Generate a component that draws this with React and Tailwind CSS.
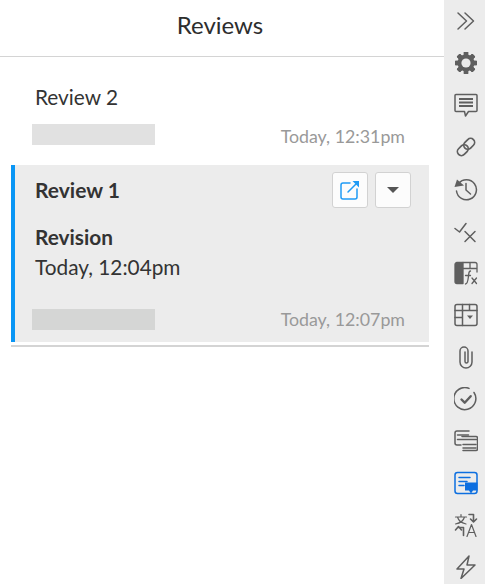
const Glyph = ({ children, fill = "none", stroke = "#5f5f5f", width = 1.5, box = "0 0 24 24" }) => (
  <svg viewBox={box} className="w-[24px] h-[24px]" fill={fill} stroke={stroke} strokeWidth={width} strokeLinecap="round" strokeLinejoin="round">
    {children}
  </svg>
);

const gearTeeth = [0, 45, 90, 135, 180, 225, 270, 315];

const SIDE_ICONS = [
  <Glyph key="collapse" width={1.5}>
    <path d="M4 4l8.500 8L4 20" />
    <path d="M11 4l8.500 8-8.500 8" />
  </Glyph>,
  <Glyph key="settings" width={0}>
    {gearTeeth.map((a) => (
      <rect key={a} x="9.800" y="1" width="4.400" height="22" rx="0.600" fill="#5f5f5f" transform={`rotate(${a} 12 12)`} />
    ))}
    <circle cx="12" cy="12" r="8.500" fill="#5f5f5f" />
    <circle cx="12" cy="12" r="4.600" fill="#ececec" />
  </Glyph>,
  <Glyph key="comment" width={1.500}>
    <path d="M2 1.500h20a1 1 0 0 1 1 1v15a1 1 0 0 1-1 1h-7.500L11.500 23l-1-4.500H2a1 1 0 0 1-1-1v-15a1 1 0 0 1 1-1z" />
    <path d="M5 6h14M5 9.500h14M5 13h14" strokeWidth={1.800} strokeLinecap="butt" />
  </Glyph>,
  <Glyph key="link" width={1.700}>
    <g transform="rotate(-45 12 12)">
      <rect x="1.500" y="8" width="12" height="8" rx="4" />
      <rect x="10.500" y="8" width="12" height="8" rx="4" />
    </g>
  </Glyph>,
  <Glyph key="history" width={1.500}>
    <path d="M4.600 6.500A10 10 0 1 1 2.500 14" />
    <path d="M0.500 10L3 2.500 10 8.500z" fill="#5f5f5f" stroke="none" />
    <path d="M12 6.500V13l4.500 4" />
  </Glyph>,
  <Glyph key="check-cross" width={1.500}>
    <path d="M1 9.500l4.500 3.500L12 4.500" />
    <path d="M11 12.500l10 10M21 12.500l-10 10" />
  </Glyph>,
  <Glyph key="formula" width={1.300}>
    <path d="M9 1.500H3a2 2 0 0 0-2 2v17a2 2 0 0 0 2 2h6z" fill="#5f5f5f" stroke="#5f5f5f" />
    <path d="M9 1.500h12a2 2 0 0 1 2 2V11M9 7.500h14M16 1.500v6" />
    <path d="M16.500 10c-2 0-1.600 2-2 5s-.6 8-3 8M11.500 14.500h5" />
    <path d="M18 17l4.500 5.500M22.500 17L18 22.500" />
  </Glyph>,
  <Glyph key="table" width={1.500}>
    <rect x="1" y="1.500" width="22" height="21" rx="2" />
    <path d="M1 7.500h22M1 14.500h7M8.500 1.500v21M15.500 1.500v6" />
    <path d="M13 12.500h6l-3 3.500z" fill="#5f5f5f" stroke="none" />
  </Glyph>,
  <Glyph key="attach" width={1.500}>
    <path d="M18 7v10a6 6 0 0 1-12 0V6a4 4 0 0 1 8 0v10.500a1.500 1.500 0 0 1-3 0V7" />
  </Glyph>,
  <Glyph key="done" width={1.500}>
    <path d="M20 5.500A11 11 0 1 1 15 1.400" />
    <path d="M7.500 12.500l3.200 3.200 6-6.500" strokeWidth={2.400} />
  </Glyph>,
  <Glyph key="threads" width={1.500}>
    <path d="M15 2H3a2 2 0 0 0-2 2v10a2 2 0 0 0 2 2h4" />
    <path d="M8 7.500h14a1.500 1.500 0 0 1 1.500 1.500v11a1.500 1.500 0 0 1-1.500 1.500H9" />
    <path d="M3.500 6h11M3.500 10.500h19M9 15.500h13M9 19h13" />
  </Glyph>,
  <Glyph key="review-notes" width={1.500} stroke="#0d6fe0">
    <rect x="1" y="1.500" width="22" height="21" rx="2.500" />
    <path d="M5 6.500h11M5 10.500h8M5 14.500h5" />
    <path d="M11 11.500h12.500v8H19l-2 3-2-3h-4z" fill="#0d6fe0" stroke="none" />
  </Glyph>,
  <Glyph key="translate" width={1.200}>
    <path d="M1.500 4h11M7 1.500V4M3.500 4c.8 3 4 6 8.500 7M10.500 4c-.8 3-4 6-9 7" />
    <path d="M15 1.500h4.500v7M16.500 6l3 3 3-3" strokeWidth={1.600} />
    <path d="M9.500 22.500v-8H4M1.500 17l3-3.500 3 3.500" strokeWidth={1.600} />
    <path d="M13 23.500l4.500-12L22 23.500M14.500 19.500h6" />
  </Glyph>,
  <Glyph key="bolt" width={1.500}>
    <path d="M15 1L3 14h7l-3 9.500L21 10h-8z" />
  </Glyph>,
];

function ReviewMeta({ time, timeClass, blockClass }) {
  return (
    <div className="flex items-center justify-between pl-[21px] pr-6">
      <div className={`w-[123px] h-[21px] ${blockClass}`} />
      <span className={`text-[17.800px] text-[#999999] leading-[21px] ${timeClass}`}>{time}</span>
    </div>
  );
}

export default function App() {
  return (
    <div className="flex h-[584px] w-[485px] overflow-hidden bg-white text-[#333333] font-['Lato',sans-serif]">
      <div className="flex-1 min-w-0">
        <header className="h-[57px] border-b border-[#d4d4d4] flex items-center justify-center pr-[4px]">
          <h1 className="text-[24px] leading-[28px] text-[#2d2d2d] pb-[6px]">Reviews</h1>
        </header>

        <div className="pl-[11px] pr-[15px]">
          <section className="pt-[27px] h-[108px]">
            <p className="pl-6 text-[20.800px] leading-[27px] mb-[13px] -mt-[1px]">Review 2</p>
            <div className="-mt-[2px]">
              <ReviewMeta time="Today, 12:31pm" timeClass="pt-[5px]" blockClass="bg-[#e1e1e1]" />
            </div>
          </section>

          <section className="h-[177px] bg-[#ececec] border-l-4 border-[#0a96f5] pt-[7px]">
            <div className="flex items-start justify-between pl-5 pr-[18px]">
              <h2 className="text-[21px] leading-[36px] font-bold">Review 1</h2>
              <div className="flex gap-[7px]">
                <button className="w-[36px] h-[36px] flex items-center justify-center bg-[#fcfcfc] border border-[#d2d2d2] rounded-[3px]">
                  <svg viewBox="0 0 20 20" className="w-[20px] h-[20px]" fill="none" stroke="#1f9bf5" strokeWidth="1.500" strokeLinecap="round" strokeLinejoin="round">
                    <path d="M10 3H3a2 2 0 0 0-2 2v12a2 2 0 0 0 2 2h12a2 2 0 0 0 2-2V9" />
                    <path d="M8 12l9-9" />
                    <path d="M12.500 1h6.500v6.500z" fill="#1f9bf5" stroke="none" />
                  </svg>
                </button>
                <button className="w-[36px] h-[36px] flex items-center justify-center bg-[#fcfcfc] border border-[#d2d2d2] rounded-[3px]">
                  <span className="block w-0 h-0 border-x-[6px] border-x-transparent border-t-[6px] border-t-[#555555]" />
                </button>
              </div>
            </div>
            <div className="pl-5 mt-[14px]">
              <p className="text-[20.800px] leading-[30px] font-bold">Revision</p>
              <p className="text-[20.800px] leading-[30px]">Today, 12:04pm</p>
            </div>
            <div className="mt-[26px] -ml-[4px]">
              <ReviewMeta time="Today, 12:07pm" timeClass="pt-[1px]" blockClass="bg-[#d5d6d5]" />
            </div>
          </section>

          <div className="mt-[3px] h-[2px] bg-[#d4d4d4]" />
        </div>
      </div>

      <aside className="w-[41px] shrink-0 bg-[#ececec] flex flex-col items-center pt-[9px] gap-[18px] pl-[3px]">
        {SIDE_ICONS}
      </aside>
    </div>
  );
}
